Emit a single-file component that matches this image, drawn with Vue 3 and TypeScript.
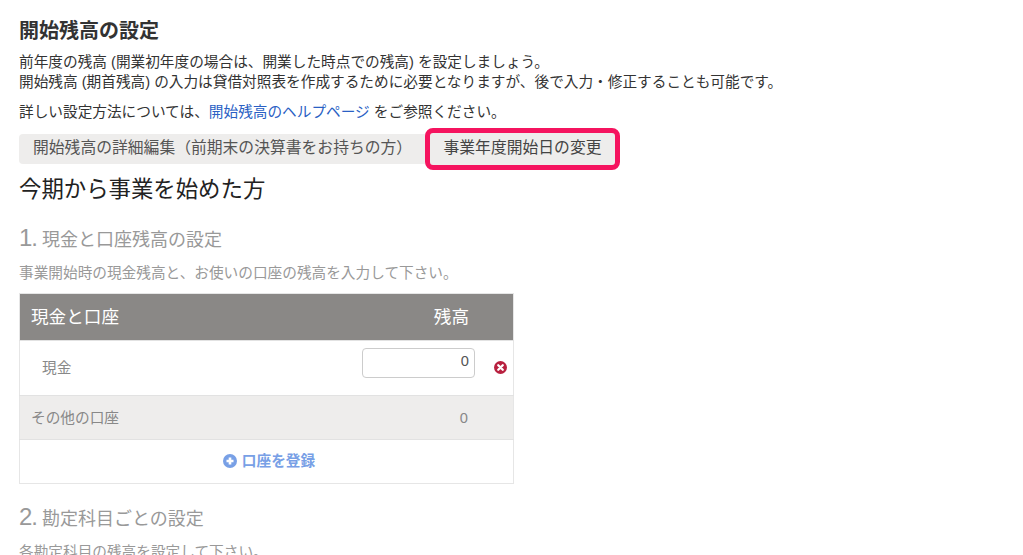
<script setup lang="ts">
const paragraphs = [
  '前年度の残高 (開業初年度の場合は、開業した時点での残高) を設定しましょう。',
  '開始残高 (期首残高) の入力は貸借対照表を作成するために必要となりますが、後で入力・修正することも可能です。',
]
</script>

<template>
  <div class="page">
    <h2 class="title">開始残高の設定</h2>
    <p class="intro">
      <template v-for="line in paragraphs" :key="line">{{ line }}<br /></template>
    </p>
    <p class="help">
      詳しい設定方法については、<a class="link">開始残高のヘルプページ</a> をご参照ください。
    </p>

    <div class="tabs">
      <span class="tab">開始残高の詳細編集（前期末の決算書をお持ちの方）</span>
      <span class="tab-marked">事業年度開始日の変更</span>
    </div>

    <h3 class="lead">今期から事業を始めた方</h3>

    <h4 class="step"><span class="num">1.</span> 現金と口座残高の設定</h4>
    <p class="desc">事業開始時の現金残高と、お使いの口座の残高を入力して下さい。</p>

    <table class="balances">
      <thead>
        <tr>
          <th class="name">現金と口座</th>
          <th class="amount">残高</th>
          <th class="action"></th>
        </tr>
      </thead>
      <tbody>
        <tr class="cash">
          <td class="name indent">現金</td>
          <td class="amount"><input class="field" type="text" value="0" /></td>
          <td class="action">
            <svg class="remove" viewBox="0 0 16 16" width="13" height="13">
              <circle cx="8" cy="8" r="8" fill="#b8203f" />
              <path d="M5.2 5.2l5.6 5.6M10.8 5.2l-5.6 5.6" stroke="#fff" stroke-width="2.8" stroke-linecap="round" />
            </svg>
          </td>
        </tr>
        <tr class="other">
          <td class="name">その他の口座</td>
          <td class="amount other-value">0</td>
          <td class="action"></td>
        </tr>
        <tr class="add">
          <td colspan="3">
            <a class="add-link">
              <svg viewBox="0 0 16 16" width="14" height="14">
                <circle cx="8" cy="8" r="8" fill="#78a0e6" />
                <path d="M8 4v8M4 8h8" stroke="#fff" stroke-width="3" />
              </svg>
              口座を登録
            </a>
          </td>
        </tr>
      </tbody>
    </table>

    <h4 class="step step-two"><span class="num">2.</span> 勘定科目ごとの設定</h4>
    <p class="desc">各勘定科目の残高を設定して下さい。</p>
  </div>
</template>

<style>
html,
body {
  overflow: hidden;
  background: #fff;
}
</style>

<style scoped>
.page {
  height: 555px;
  overflow: hidden;
  box-sizing: border-box;
  padding: 20px 19px 0;
  font-family: 'Liberation Sans', 'Noto Sans CJK JP', sans-serif;
  font-size: 14.67px;
  line-height: 20px;
  color: #333;
}

.title {
  margin: 0 0 10px;
  font-size: 20px;
  line-height: 22px;
  font-weight: 700;
}

.intro {
  margin: 0 0 10px;
}

.help {
  margin: 0 0 6px;
}

.link {
  color: #2a5fc4;
}

.tabs {
  display: flex;
  align-items: center;
  width: 601px;
  height: 42px;
  position: relative;
}

.tabs::before {
  content: '';
  position: absolute;
  left: 0;
  right: 0;
  top: 6px;
  height: 30px;
  background: #eeedec;
  border-radius: 4px;
}

.tab {
  position: relative;
  padding: 0 14px 2px;
  width: 406px;
  box-sizing: border-box;
  font-size: 15.8px;
  color: #555;
  white-space: nowrap;
}

.tab-marked {
  position: relative;
  box-sizing: border-box;
  width: 195px;
  height: 42px;
  line-height: 30px;
  text-align: center;
  font-size: 15.8px;
  color: #444;
  background: #eeedec;
  border: 5px solid #f5145f;
  border-radius: 8px;
}

.lead {
  margin: 4px 0 0;
  font-size: 22.4px;
  line-height: 32px;
  font-weight: 400;
  color: #222;
}

.step {
  margin: 16px 0 0;
  font-size: 18px;
  line-height: 32px;
  font-weight: 400;
  color: #999;
}

.step-two {
  margin-top: 17px;
}

.num {
  font-size: 24px;
  letter-spacing: -1px;
}

.desc {
  margin: 7px 0 10px;
  color: #999;
}

.balances {
  width: 495px;
  border-collapse: collapse;
  border: 1px solid #e6e6e6;
  table-layout: fixed;
}

.balances th {
  height: 46px;
  padding: 0 11px;
  background: #8a8886;
  color: #fff;
  font-size: 17.6px;
  font-weight: 400;
}

.balances td {
  padding: 0 11px;
  border-top: 1px solid #e2e2e2;
  color: #888;
}

.balances .name {
  text-align: left;
}

.balances .indent {
  padding-left: 22px;
}

.balances .amount {
  width: 107px;
  padding: 0;
  text-align: right;
}

.balances th.amount {
  padding-right: 6px;
}

.balances .action {
  width: 38px;
  padding: 0;
  text-align: center;
}

.cash td {
  height: 54px;
}

.field {
  box-sizing: border-box;
  width: 113px;
  height: 30px;
  margin-top: -11px;
  padding: 0 5px 3px;
  border: 1px solid #ccc;
  border-radius: 4px;
  font: inherit;
  color: #555;
  text-align: right;
  display: block;
}

.remove {
  display: block;
  margin: -2px auto 0 19px;
}

.other td {
  height: 43px;
  background: #eeedec;
}

.balances .other-value {
  padding-right: 7px;
}

.add td {
  height: 43px;
  text-align: center;
}

.add-link {
  display: inline-flex;
  align-items: center;
  gap: 5px;
  padding-left: 5px;
  color: #78a0e6;
  font-weight: 700;
}
</style>
